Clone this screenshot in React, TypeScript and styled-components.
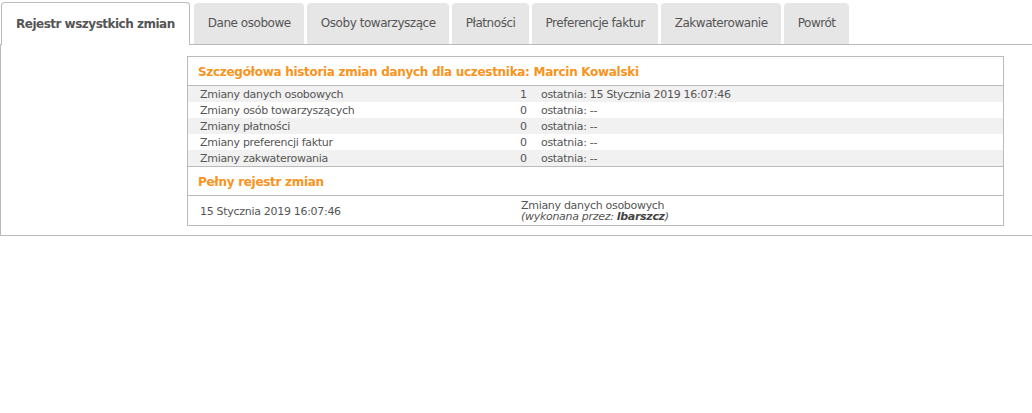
import styled, { createGlobalStyle } from 'styled-components';

const orange = '#f7941d';
const textColor = '#555';
const borderColor = '#bbb';

const GlobalStyle = createGlobalStyle`
  body {
    margin: 0;
    background: #fff;
    font-family: 'DejaVu Sans', Verdana, sans-serif;
    color: ${textColor};
  }
`;

const Page = styled.div`
  padding-top: 2px;
`;

const TabBar = styled.ul`
  list-style: none;
  margin: 0 0 -1px 1px;
  padding: 0;
  display: flex;
  align-items: flex-end;
  gap: 3px;
  position: relative;
  z-index: 1;
`;

const Tab = styled.li<{ active?: boolean }>`
  height: ${(p) => (p.active ? '43px' : '41px')};
  padding: ${(p) => (p.active ? '0 14px 1px 14px' : '0 13px 1px 14px')};
  display: flex;
  align-items: center;
  box-sizing: border-box;
  border-radius: 4px 4px 0 0;
  font-size: 12px;
  letter-spacing: ${(p) => (p.active ? '-0.5px' : '-0.45px')};
  white-space: nowrap;
  font-weight: ${(p) => (p.active ? 'bold' : 'normal')};
  background: ${(p) => (p.active ? '#fff' : '#e6e6e6')};
  border: ${(p) => (p.active ? `1px solid ${borderColor}` : 'none')};
  border-bottom: none;
  margin-bottom: ${(p) => (p.active ? '0' : '1px')};
  margin-right: ${(p) => (p.active ? '1px' : '0')};
`;

const Panel = styled.div`
  border: 1px solid ${borderColor};
  border-right: none;
  padding: 11px 0 9px 186px;
`;

const Box = styled.div`
  width: 815px;
  border: 1px solid ${borderColor};
  font-size: 11px;
  letter-spacing: -0.3px;
`;

const SectionTitle = styled.div`
  height: 29px;
  display: flex;
  align-items: center;
  padding: 1px 0 0 10px;
  box-sizing: border-box;
  color: ${orange};
  font-weight: bold;
  font-size: 12px;
  letter-spacing: -0.3px;
  border-bottom: 1px solid ${borderColor};
`;

const SummaryList = styled.div`
  border-bottom: 1px solid ${borderColor};
`;

const SummaryRow = styled.div<{ shaded: boolean }>`
  display: grid;
  grid-template-columns: 326px 20px 1fr;
  height: 16px;
  align-items: center;
  background: ${(p) => (p.shaded ? '#f1f1f1' : '#fff')};
`;

const Cell = styled.div<{ indent: number }>`
  padding-left: ${(p) => p.indent}px;
  white-space: nowrap;
`;

const LogRow = styled.div`
  display: grid;
  grid-template-columns: 326px 1fr;
  height: 29px;
  align-items: center;
  padding-top: 1px;
  box-sizing: border-box;
`;

const LogDetail = styled.div`
  padding-left: 7px;
  line-height: 11px;
`;

const Author = styled.em`
  font-style: italic;
  b {
    color: #444;
  }
`;

const tabs = [
  'Rejestr wszystkich zmian',
  'Dane osobowe',
  'Osoby towarzyszące',
  'Płatności',
  'Preferencje faktur',
  'Zakwaterowanie',
  'Powrót',
];

const summary = [
  { label: 'Zmiany danych osobowych', count: 1, last: '15 Stycznia 2019 16:07:46' },
  { label: 'Zmiany osób towarzyszących', count: 0, last: '--' },
  { label: 'Zmiany płatności', count: 0, last: '--' },
  { label: 'Zmiany preferencji faktur', count: 0, last: '--' },
  { label: 'Zmiany zakwaterowania', count: 0, last: '--' },
];

export default function App() {
  return (
    <Page>
      <GlobalStyle />
      <TabBar>
        {tabs.map((t, i) => (
          <Tab key={t} active={i === 0}>
            {t}
          </Tab>
        ))}
      </TabBar>
      <Panel>
        <Box>
          <SectionTitle>Szczegółowa historia zmian danych dla uczestnika: Marcin Kowalski</SectionTitle>
          <SummaryList>
            {summary.map((row, i) => (
              <SummaryRow key={row.label} shaded={i % 2 === 0}>
                <Cell indent={12}>{row.label}</Cell>
                <Cell indent={6}>{row.count}</Cell>
                <Cell indent={7}>ostatnia: {row.last}</Cell>
              </SummaryRow>
            ))}
          </SummaryList>
          <SectionTitle>Pełny rejestr zmian</SectionTitle>
          <LogRow>
            <Cell indent={12}>15 Stycznia 2019 16:07:46</Cell>
            <LogDetail>
              Zmiany danych osobowych
              <br />
              <Author>
                (wykonana przez: <b>lbarszcz</b>)
              </Author>
            </LogDetail>
          </LogRow>
        </Box>
      </Panel>
    </Page>
  );
}
